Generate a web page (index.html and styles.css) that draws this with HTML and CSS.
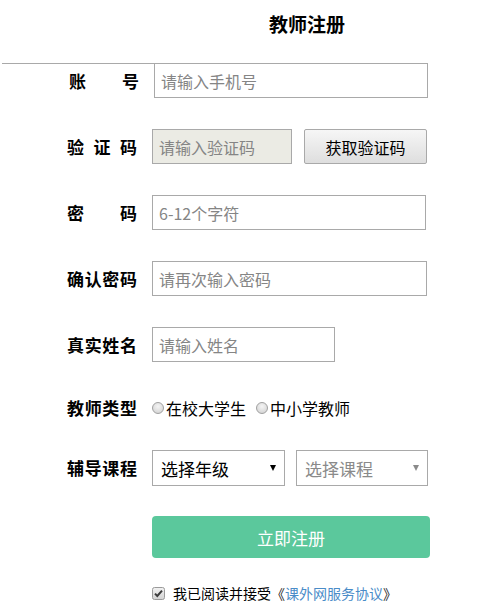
FILE: index.html
```html
<!DOCTYPE html>
<html lang="zh-CN">
<head>
<meta charset="utf-8">
<title>教师注册</title>
<link rel="stylesheet" href="styles.css">
</head>
<body>
<div class="page">
  <h1 class="title">教师注册</h1>
  <form class="form">
    <div class="row row-first">
      <div class="label-cell"><span class="label">账号</span></div>
      <input class="field w-274 field-first" type="text" placeholder="请输入手机号">
    </div>
    <div class="row">
      <div class="label-cell"><span class="label">验证码</span></div>
      <div class="pair">
        <input class="field field-muted w-140" type="text" placeholder="请输入验证码">
        <button class="code-btn" type="button">获取验证码</button>
      </div>
    </div>
    <div class="row">
      <div class="label-cell"><span class="label">密码</span></div>
      <input class="field w-274" type="password" placeholder="6-12个字符">
    </div>
    <div class="row">
      <div class="label-cell"><span class="label">确认密码</span></div>
      <input class="field w-275" type="password" placeholder="请再次输入密码">
    </div>
    <div class="row">
      <div class="label-cell"><span class="label">真实姓名</span></div>
      <input class="field w-183" type="text" placeholder="请输入姓名">
    </div>
    <div class="row row-radio">
      <div class="label-cell"><span class="label">教师类型</span></div>
      <div class="radios">
        <label class="radio"><span class="radio-dot"></span>在校大学生</label>
        <label class="radio"><span class="radio-dot"></span>中小学教师</label>
      </div>
    </div>
    <div class="row row-select">
      <div class="label-cell"><span class="label">辅导课程</span></div>
      <div class="pair pair-select">
        <div class="select">
          <span class="select-text">选择年级</span>
          <span class="select-arrow"></span>
        </div>
        <div class="select select-disabled">
          <span class="select-text">选择课程</span>
          <span class="select-arrow"></span>
        </div>
      </div>
    </div>
    <div class="actions">
      <button class="submit" type="button">立即注册</button>
      <div class="agree">
        <svg class="check" width="13" height="13" viewBox="0 0 13 13">
          <defs>
            <linearGradient id="cb" x1="0" y1="0" x2="0" y2="1">
              <stop offset="0" stop-color="#f2f2f2"/>
              <stop offset="1" stop-color="#d2d2d2"/>
            </linearGradient>
          </defs>
          <rect x="0.5" y="0.5" width="12" height="12" rx="2" fill="url(#cb)" stroke="#9a9a9a"/>
          <path d="M3 6.6 L5.3 9 L10 3.6" fill="none" stroke="#3c3c3c" stroke-width="2"/>
        </svg>
        <span class="agree-text">我已阅读并接受<a class="agree-link" href="#"><span class="bracket">《</span>课外网服务协议<span class="bracket">》</span></a></span>
      </div>
    </div>
  </form>
</div>
</body>
</html>
```

FILE: styles.css
```css
* {
  box-sizing: border-box;
}

body {
  margin: 0;
  background: #ffffff;
  font-family: "Noto Sans CJK SC", "Microsoft YaHei", sans-serif;
  color: #000000;
}

.page {
  width: 495px;
}

.title {
  margin: 0 0 27px 0;
  padding: 12px 0 0 269px;
  font-size: 19px;
  line-height: 24px;
  font-weight: bold;
}

.form {
  margin-left: 2px;
}

.row {
  display: flex;
  align-items: center;
  height: 35px;
  margin-bottom: 31px;
}

.row-first .label-cell {
  border-top: 1px solid #a9a9a9;
  align-self: flex-start;
  height: 35px;
  width: 152px;
}

.label-cell {
  width: 150px;
  flex: none;
  display: flex;
  align-items: center;
  justify-content: flex-end;
  padding-right: 15px;
}

.label {
  display: inline-block;
  width: 70px;
  font-size: 17px;
  line-height: 24px;
  font-weight: bold;
  text-align: justify;
  text-align-last: justify;
  white-space: nowrap;
}

.field {
  height: 35px;
  border: 1px solid #a9a9a9;
  padding: 0 6px;
  font-family: inherit;
  font-size: 16px;
  color: #333;
  background: #ffffff;
  outline: none;
}

.field::placeholder {
  color: #858585;
}

.field-muted {
  background: #ebebe4;
}

.w-274 { width: 274px; }
.w-275 { width: 275px; }
.w-140 { width: 140px; }
.w-183 { width: 183px; }

.pair {
  display: flex;
  align-items: center;
  gap: 12px;
}

.code-btn {
  width: 123px;
  height: 35px;
  border: 1px solid #a9a9a9;
  border-radius: 2px;
  background: linear-gradient(#f6f6f6, #dedede);
  font-family: inherit;
  font-size: 16px;
  color: #000;
  padding: 0;
}

.row-radio {
  height: 30px;
  margin-bottom: 27px;
}

.radios {
  display: flex;
  align-items: center;
  gap: 10px;
  font-size: 16px;
  line-height: 22px;
}

.radio {
  display: flex;
  align-items: center;
  gap: 2px;
}

.radio-dot {
  width: 12px;
  height: 12px;
  border-radius: 50%;
  border: 1px solid #a0a0a0;
  background: radial-gradient(circle at 50% 35%, #f4f4f4, #cfcfcf);
}

.row-select {
  height: 36px;
  margin-bottom: 30px;
}

.pair-select {
  gap: 11px;
}

.select {
  display: flex;
  align-items: center;
  width: 133px;
  height: 36px;
  border: 1px solid #a9a9a9;
  padding: 0 8px 0 8px;
  font-size: 17px;
  color: #000;
}

.select-disabled {
  width: 132px;
  color: #8a8a8a;
}

.select-text {
  flex: 1;
}

.select-arrow {
  width: 0;
  height: 0;
  border-left: 3px solid transparent;
  border-right: 3px solid transparent;
  border-top: 6px solid #000;
}

.select-disabled .select-arrow {
  border-top-color: #8a8a8a;
}

.actions {
  margin-left: 150px;
}

.submit {
  display: block;
  width: 278px;
  height: 42px;
  border: none;
  border-radius: 4px;
  background: #5bc89c;
  color: #ffffff;
  font-family: inherit;
  font-size: 17px;
  padding: 0;
}

.agree {
  display: flex;
  align-items: center;
  margin-top: 26px;
  gap: 8px;
  font-size: 14px;
  line-height: 18px;
}

.check {
  display: block;
  flex: none;
}

.agree-link {
  color: #4a8cc8;
  text-decoration: none;
}

.bracket {
  color: #1a1a1a;
}
```
